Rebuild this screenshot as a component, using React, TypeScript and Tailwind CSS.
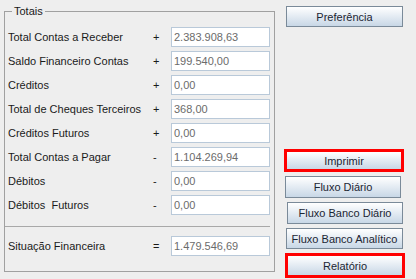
import React from 'react';

type Row = { label: string; sign: string; value: string };

const rows: Row[] = [
  { label: 'Total Contas a Receber', sign: '+', value: '2.383.908,63' },
  { label: 'Saldo Financeiro Contas', sign: '+', value: '199.540,00' },
  { label: 'Créditos', sign: '+', value: '0,00' },
  { label: 'Total de Cheques Terceiros', sign: '+', value: '368,00' },
  { label: 'Créditos Futuros', sign: '+', value: '0,00' },
  { label: 'Total Contas a Pagar', sign: '-', value: '1.104.269,94' },
  { label: 'Débitos', sign: '-', value: '0,00' },
  { label: 'Débitos  Futuros', sign: '-', value: '0,00' },
];

function ValueRow({ label, sign, value }: Row) {
  return (
    <div className="flex h-[20px] items-center">
      <span className="w-[145px] whitespace-pre text-[#1a1a1a]">{label}</span>
      <span className="w-[18px] text-[#1a1a1a]">{sign}</span>
      <div className="flex h-[20px] w-[99px] items-center border border-[#b9c9d9] bg-white pl-[2px] text-[#6b6b6b]">
        {value}
      </div>
    </div>
  );
}

function Button({ label, className, danger }: { label: string; className: string; danger?: boolean }) {
  return (
    <button
      className={
        'flex items-center justify-center bg-linear-to-b from-white to-[#c8d7e6] text-[#1b2533] ' +
        (danger ? 'border-[3px] border-[#ff0000] ' : 'border border-[#7a8a99] ') +
        className
      }
    >
      {label}
    </button>
  );
}

export default function App() {
  return (
    <div className="flex h-[279px] w-[416px] bg-[#eeeeee] font-['Liberation_Sans',Arial,sans-serif] text-[11px] leading-[14px]">
      <fieldset className="ml-[4px] mt-[4px] h-[268px] w-[271px] border border-[#a0a0a0] pl-[3px]">
        <legend className="ml-[4px] px-[2px] text-[#1a1a1a]">Totais</legend>
        <div className="flex flex-col gap-[4px] pt-[9px]">
          {rows.map((r) => (
            <ValueRow key={r.label} {...r} />
          ))}
        </div>
        <div className="-ml-[3px] mt-[11px] h-[1px] w-[265px] bg-[#a8a8a8]" />
        <div className="mt-[9px]">
          <ValueRow label="Situação Financeira" sign="=" value="1.479.546,69" />
        </div>
      </fieldset>

      <div className="flex flex-col items-start">
        <Button label="Preferência" className="ml-[11px] mt-[6px] h-[21px] w-[117px]" />
        <Button label="Imprimir" danger className="ml-[9px] mt-[122px] h-[23px] w-[120px]" />
        <Button label="Fluxo Diário" className="ml-[10px] mt-[4px] h-[22px] w-[116px]" />
        <Button label="Fluxo Banco Diário" className="ml-[12px] mt-[4px] h-[22px] w-[116px]" />
        <Button label="Fluxo Banco Analítico" className="ml-[11px] mt-[4px] h-[21px] w-[117px]" />
        <Button label="Relatório" danger className="ml-[10px] mt-[4px] h-[25px] w-[120px]" />
      </div>
    </div>
  );
}
